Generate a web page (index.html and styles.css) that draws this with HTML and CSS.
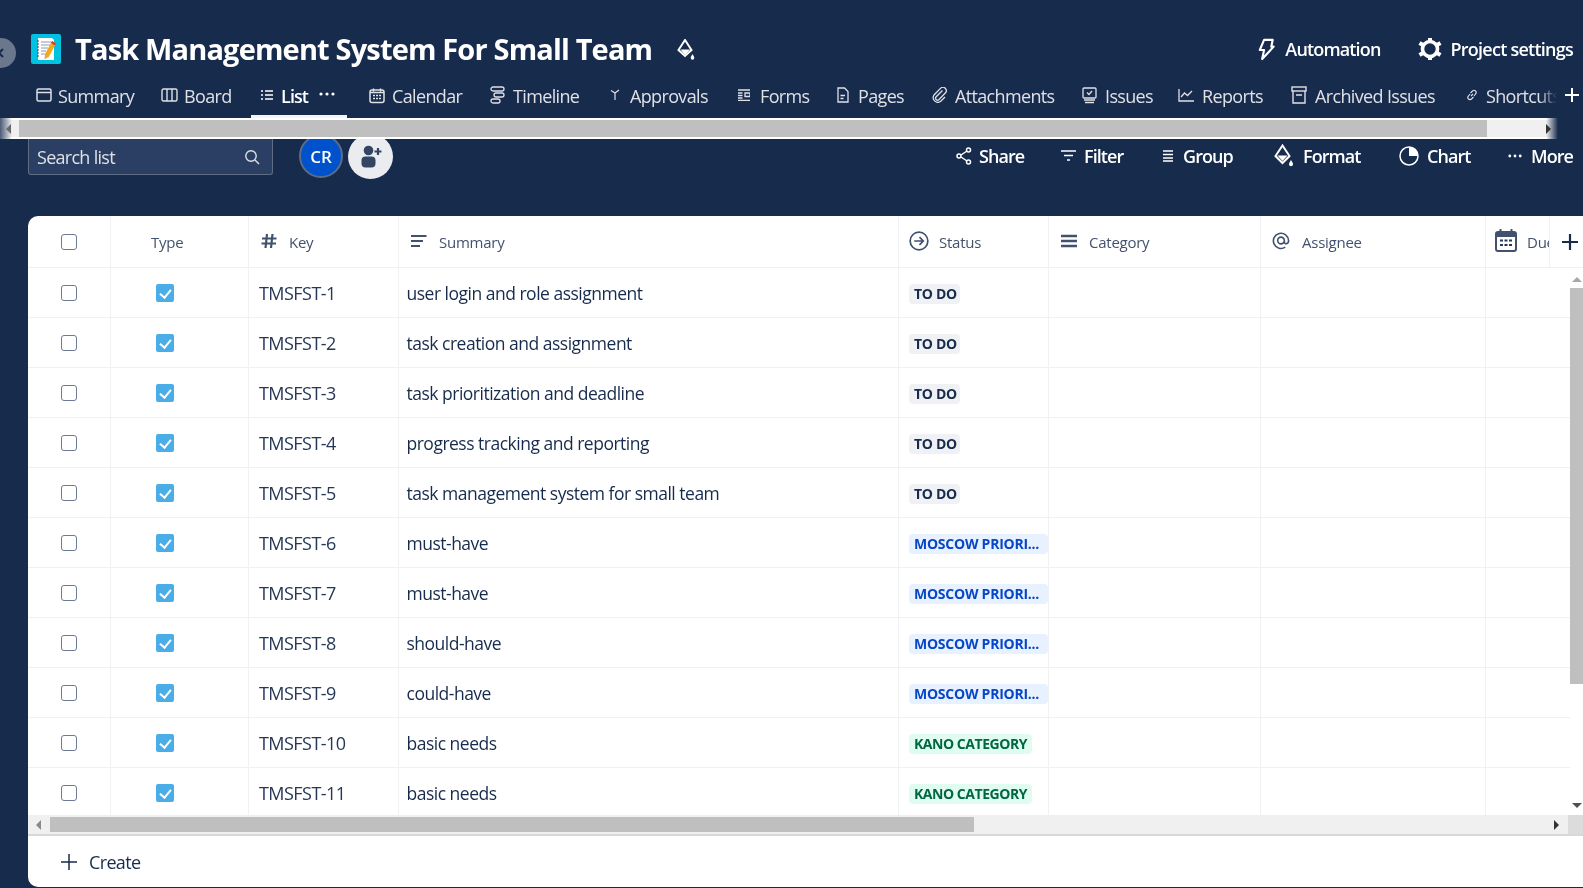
FILE: index.html
```html
<!DOCTYPE html>
<html lang="en">
<head>
<meta charset="utf-8">
<title>Task Management System For Small Team</title>
<link rel="stylesheet" href="styles.css">
</head>
<body>
<div class="page">
  <div class="back"><svg viewBox="0 0 12 12" width="12" height="12"><path d="M8 2 4 6l4 4" fill="none" stroke="#172b4d" stroke-width="2"/></svg></div>

  <header class="topbar">
    <div class="title-group">
      <svg class="logo" viewBox="0 0 30 30" width="30" height="30">
        <rect width="30" height="30" rx="2" fill="#00c2e0"/>
        <path d="M7 4h14l2 2v20H7z" fill="#fff"/>
        <path d="M6 7h2M6 10h2M6 13h2M6 16h2M6 19h2M6 22h2" stroke="#33475f" stroke-width="1"/>
        <path d="M10 8h10M10 11h9M10 14h7M10 17h5M10 20h4" stroke="#8a9bb0" stroke-width="1"/>
        <path d="M21 7l4 2.500-7 13-4.500 3 .5-5.500z" fill="#f5a623"/>
        <path d="M21 7l4 2.500-1 2-4-2.500z" fill="#e0392b"/>
      </svg>
      <h1 class="title">Task Management System For Small Team</h1>
      <svg class="paint" viewBox="0 0 18 22" width="18" height="22"><path d="M8 1 1.500 11 8 17l6.500-6z" fill="none" stroke="#fff" stroke-width="2"/><path d="M3.500 10.500h9.500L8 16z" fill="#fff"/><path d="M15.500 15c1 1.800 1.800 2.800 1.800 4a1.800 1.800 0 0 1-3.600 0c0-1.200.8-2.200 1.800-4z" fill="#fff"/></svg>
    </div>
    <div class="top-actions">
      <div class="top-action auto">
        <svg viewBox="0 0 18 24" width="18" height="23"><path d="M7 2h9l-1.500 7H17L5 22l2-9.500H2.500z" fill="none" stroke="#fff" stroke-width="2.200" stroke-linejoin="round"/></svg>
        <span>Automation</span>
      </div>
      <div class="top-action">
        <svg viewBox="0 0 24 24" width="24" height="24"><circle cx="12" cy="12" r="7.500" fill="none" stroke="#fff" stroke-width="3.600"/><path d="M12 1v4M12 19v4M1.500 6l3.500 2M19 16l3.500 2M1.500 18 5 16M19 8l3.500-2" stroke="#fff" stroke-width="4"/></svg>
        <span>Project settings</span>
      </div>
    </div>
  </header>

  <nav class="tabs">
    <div class="tab"><span class="ti"><svg viewBox="0 0 16 14" width="16" height="14"><rect x="1" y="1" width="14" height="12" rx="1.500" fill="none" stroke="#dfe1e6" stroke-width="1.500"/><path d="M1 4.500h14" stroke="#dfe1e6" stroke-width="1.500"/></svg></span><span>Summary</span></div>
    <div class="tab"><span class="ti w23"><svg viewBox="0 0 17 14" width="17" height="14"><rect x="1" y="1" width="15" height="12" rx="1.500" fill="none" stroke="#dfe1e6" stroke-width="1.400"/><path d="M6 1v12M11 1v12" stroke="#dfe1e6" stroke-width="1.400"/></svg></span><span>Board</span></div>
    <div class="tab active"><span class="ti w20"><svg viewBox="0 0 12 12" width="12" height="12"><path d="M4 2h8M4 6h8M4 10h8M0 2h2M0 6h2M0 10h2" stroke="#fff" stroke-width="1.300"/></svg></span><span>List</span><svg class="dots" viewBox="0 0 16 4" width="16" height="4"><circle cx="2" cy="2" r="1.600" fill="#fff"/><circle cx="8" cy="2" r="1.600" fill="#fff"/><circle cx="14" cy="2" r="1.600" fill="#fff"/></svg></div>
    <div class="tab"><span class="ti w23"><svg viewBox="0 0 16 16" width="16" height="17"><rect x="1" y="2.500" width="14" height="12.500" rx="2" fill="none" stroke="#dfe1e6" stroke-width="1.500"/><path d="M1 5h14M4.500 1v3M11.500 1v3" stroke="#dfe1e6" stroke-width="1.500"/><path d="M4 8h2M7 8h2M10 8h2M4 11h2M7 11h2M10 11h2" stroke="#dfe1e6" stroke-width="1.500"/></svg></span><span>Calendar</span></div>
    <div class="tab"><span class="ti w23"><svg viewBox="0 0 15 18" width="15" height="18"><rect x="1" y="1" width="13" height="4" rx="2" fill="none" stroke="#dfe1e6" stroke-width="1.300"/><rect x="4" y="7" width="10" height="4" rx="2" fill="none" stroke="#dfe1e6" stroke-width="1.300"/><rect x="1" y="13" width="9" height="4" rx="2" fill="none" stroke="#dfe1e6" stroke-width="1.300"/></svg></span><span>Timeline</span></div>
    <div class="tab"><span class="ti w20"><svg viewBox="0 0 10 12" width="10" height="12"><path d="M1 1.500 5 4l4-3M5 4v7" fill="none" stroke="#dfe1e6" stroke-width="1.200"/></svg></span><span>Approvals</span></div>
    <div class="tab"><span class="ti"><svg viewBox="0 0 12 12" width="12" height="12"><path d="M0 1h12M0 4h4.500M0 6.500h4.500M0 9h4.500M0 11.500h12M7 4h5v3.500H7z" fill="none" stroke="#dfe1e6" stroke-width="1.300"/></svg></span><span>Forms</span></div>
    <div class="tab"><span class="ti w21"><svg viewBox="0 0 12 16" width="12" height="16"><path d="M1 1h6.500L11 4.500V15H1z" fill="none" stroke="#dfe1e6" stroke-width="1.300"/><path d="M3.500 8.500H8M3.500 11.500H6.500" stroke="#dfe1e6" stroke-width="1.300"/></svg></span><span>Pages</span></div>
    <div class="tab"><span class="ti w23"><svg viewBox="0 0 16 16" width="16" height="16"><path d="M10.500 3.500 4 10a2 2 0 0 0 2.800 2.800l6.500-6.800a3.300 3.300 0 0 0-4.800-4.600L2 8a4.700 4.700 0 0 0 6.500 6.500L13 10" fill="none" stroke="#dfe1e6" stroke-width="1.300"/></svg></span><span>Attachments</span></div>
    <div class="tab"><span class="ti w23"><svg viewBox="0 0 15 17" width="15" height="17"><rect x="1" y="1" width="13" height="10" rx="1" fill="none" stroke="#dfe1e6" stroke-width="1.300"/><path d="m5 5.500 2 2 3-3.500M2 13h11M3 15.500h9" fill="none" stroke="#dfe1e6" stroke-width="1.300"/></svg></span><span>Issues</span></div>
    <div class="tab"><span class="ti w24"><svg viewBox="0 0 16 14" width="16" height="14"><path d="M1 1v12h15" fill="none" stroke="#dfe1e6" stroke-width="1.300"/><path d="m3 9 3.500-4 3 2.500L14 3" fill="none" stroke="#dfe1e6" stroke-width="1.300"/></svg></span><span>Reports</span></div>
    <div class="tab"><span class="ti w24"><svg viewBox="0 0 16 18" width="16" height="18"><rect x="1" y="1" width="14" height="4" fill="none" stroke="#dfe1e6" stroke-width="1.400"/><path d="M2 5v12h12V5M5 9h6" fill="none" stroke="#dfe1e6" stroke-width="1.400"/></svg></span><span>Archived Issues</span></div>
    <div class="tab fade"><span class="ti w20"><svg viewBox="0 0 12 12" width="12" height="12"><path d="M5 7 7 5M4.500 4 6.500 2a2 2 0 0 1 3 3L8 7M7.500 8 5.500 10a2 2 0 0 1-3-3L4 5" fill="none" stroke="#dfe1e6" stroke-width="1.100"/></svg></span><span>Shortcuts</span></div>
    <div class="tab-plus"><svg viewBox="0 0 16 16" width="16" height="16"><path d="M8 1v14M1 8h14" stroke="#fff" stroke-width="2"/></svg></div>
  </nav>

  <div class="top-scroll">
    <span class="edge-left"></span>
    <span class="arrow-l"></span>
    <span class="top-thumb"></span>
    <span class="arrow-r"></span>
    <span class="edge-right"></span>
  </div>

  <section class="toolbar">
    <div class="search"><span>Search list</span>
      <svg viewBox="0 0 16 16" width="16" height="16"><circle cx="7" cy="7" r="5.200" fill="none" stroke="#dfe1e6" stroke-width="1.400"/><path d="m11 11 4 4" stroke="#dfe1e6" stroke-width="1.400"/></svg>
    </div>
    <div class="avatar"><span>CR</span></div>
    <div class="add-user"><svg viewBox="0 0 24 24" width="24" height="24"><circle cx="9.500" cy="6.500" r="4.800" fill="#344563"/><rect x="2.500" y="12.500" width="14" height="11" rx="4" fill="#344563"/><path d="M19 4v7M15.500 7.500h7" stroke="#344563" stroke-width="2.200"/></svg></div>
    <div class="tools">
      <div class="tool"><span class="tool-i"><svg viewBox="0 0 16 18" width="16" height="18"><circle cx="3" cy="9" r="2" fill="none" stroke="#fff" stroke-width="1.500"/><circle cx="12.500" cy="3" r="2" fill="none" stroke="#fff" stroke-width="1.500"/><circle cx="12.500" cy="15" r="2" fill="none" stroke="#fff" stroke-width="1.500"/><path d="M5 8l6-4M5 10l6 4" stroke="#fff" stroke-width="1.500"/></svg></span><span>Share</span></div>
      <div class="tool"><span class="tool-i"><svg viewBox="0 0 15 12" width="15" height="12"><path d="M0 1h15M3 5.500h9M6 10h3" stroke="#fff" stroke-width="1.500"/></svg></span><span>Filter</span></div>
      <div class="tool"><span class="tool-i i20"><svg viewBox="0 0 10 12" width="10" height="12"><path d="M0 1h10M0 4.500h10M0 8h10M0 11h10" stroke="#fff" stroke-width="1.300"/></svg></span><span>Group</span></div>
      <div class="tool"><span class="tool-i i29"><svg viewBox="0 0 20 24" width="20" height="24"><path d="M8.500 1.500 1.500 12l7 7 7-7z" fill="none" stroke="#fff" stroke-width="2"/><path d="M3.500 11.500h10L8.500 17z" fill="#fff"/><path d="M17 16c1 1.800 2 3 2 4.300a2 2 0 0 1-4 0c0-1.300 1-2.500 2-4.300z" fill="#fff"/></svg></span><span>Format</span></div>
      <div class="tool"><span class="tool-i i28"><svg viewBox="0 0 20 20" width="20" height="20"><circle cx="10" cy="10" r="9" fill="none" stroke="#fff" stroke-width="1.500"/><path d="M10 1a9 9 0 0 1 9 9h-9z" fill="#fff"/></svg></span><span>Chart</span></div>
      <div class="tool"><span class="tool-i"><svg viewBox="0 0 14 4" width="14" height="4"><circle cx="1.800" cy="2" r="1.400" fill="#fff"/><circle cx="7" cy="2" r="1.400" fill="#fff"/><circle cx="12.200" cy="2" r="1.400" fill="#fff"/></svg></span><span>More</span></div>
    </div>
  </section>

  <main class="card">
    <div class="head">
      <div class="hc hc-center"><span class="cb"></span></div>
      <div class="hc hc-type"><span>Type</span></div>
      <div class="hc"><span class="hi"><svg viewBox="0 0 16 16" width="16" height="16"><path d="M6 1 4.500 15M11.500 1 10 15M1 5.500h14.500M.5 10.500h14.500" stroke="#42526e" stroke-width="2.200"/></svg></span><span>Key</span></div>
      <div class="hc"><span class="hi"><svg viewBox="0 0 16 14" width="16" height="14"><path d="M0 2h15.500M0 7h12M0 12h9" stroke="#42526e" stroke-width="2.200"/></svg></span><span>Summary</span></div>
      <div class="hc hc-10"><span class="hi hi-30"><svg viewBox="0 0 21 21" width="20" height="20"><circle cx="10.500" cy="10.500" r="9.300" fill="none" stroke="#42526e" stroke-width="1.800"/><path d="M5.500 10.500h9M11 6.500l4 4-4 4" fill="none" stroke="#42526e" stroke-width="1.800"/></svg></span><span>Status</span></div>
      <div class="hc"><span class="hi"><svg viewBox="0 0 16 14" width="16" height="14"><path d="M0 2h16M0 7h16M0 12h16" stroke="#42526e" stroke-width="2.300"/></svg></span><span>Category</span></div>
      <div class="hc hc-11"><span class="hi hi-30"><svg viewBox="0 0 18 20" width="18" height="19"><path d="M12.500 10a3.500 3.500 0 1 1-7 0 3.500 3.500 0 0 1 7 0v1.500c0 2.700 4.500 2.700 4.500-1.500a8 8 0 1 0-3.500 7" fill="none" stroke="#42526e" stroke-width="1.700"/></svg></span><span>Assignee</span></div>
      <div class="hc hc-9 hc-due"><span class="hi hi-32"><svg viewBox="0 0 22 23" width="22" height="23"><rect x="1" y="3" width="20" height="19" rx="2" fill="none" stroke="#42526e" stroke-width="2"/><path d="M1 3h20v5H1z" fill="#42526e"/><path d="M5.500 0v4M16.500 0v4" stroke="#42526e" stroke-width="2"/><path d="M5 11.500h3M9.500 11.500h3M14 11.500h3M5 16h3M9.500 16h3M14 16h3" stroke="#253858" stroke-width="2"/></svg></span><span class="due">Due date</span></div>
      <div class="hc-add"><svg viewBox="0 0 16 16" width="16" height="16"><path d="M8 0v16M0 8h16" stroke="#172b4d" stroke-width="2.200"/></svg></div>
    </div>

    <div class="grid-wrap">
      <div class="rows">
        <div class="row"><div class="c c-center"><span class="cb"></span></div><div class="c c-type"><span class="tick"></span></div><div class="c c-key">TMSFST-1</div><div class="c c-sum">user login and role assignment</div><div class="c c-st"><span class="loz grey">TO DO</span></div><div class="c"></div><div class="c"></div><div class="c"></div></div>
        <div class="row"><div class="c c-center"><span class="cb"></span></div><div class="c c-type"><span class="tick"></span></div><div class="c c-key">TMSFST-2</div><div class="c c-sum">task creation and assignment</div><div class="c c-st"><span class="loz grey">TO DO</span></div><div class="c"></div><div class="c"></div><div class="c"></div></div>
        <div class="row"><div class="c c-center"><span class="cb"></span></div><div class="c c-type"><span class="tick"></span></div><div class="c c-key">TMSFST-3</div><div class="c c-sum">task prioritization and deadline</div><div class="c c-st"><span class="loz grey">TO DO</span></div><div class="c"></div><div class="c"></div><div class="c"></div></div>
        <div class="row"><div class="c c-center"><span class="cb"></span></div><div class="c c-type"><span class="tick"></span></div><div class="c c-key">TMSFST-4</div><div class="c c-sum">progress tracking and reporting</div><div class="c c-st"><span class="loz grey">TO DO</span></div><div class="c"></div><div class="c"></div><div class="c"></div></div>
        <div class="row"><div class="c c-center"><span class="cb"></span></div><div class="c c-type"><span class="tick"></span></div><div class="c c-key">TMSFST-5</div><div class="c c-sum">task management system for small team</div><div class="c c-st"><span class="loz grey">TO DO</span></div><div class="c"></div><div class="c"></div><div class="c"></div></div>
        <div class="row"><div class="c c-center"><span class="cb"></span></div><div class="c c-type"><span class="tick"></span></div><div class="c c-key">TMSFST-6</div><div class="c c-sum">must-have</div><div class="c c-st"><span class="loz blue">MOSCOW PRIORI...</span></div><div class="c"></div><div class="c"></div><div class="c"></div></div>
        <div class="row"><div class="c c-center"><span class="cb"></span></div><div class="c c-type"><span class="tick"></span></div><div class="c c-key">TMSFST-7</div><div class="c c-sum">must-have</div><div class="c c-st"><span class="loz blue">MOSCOW PRIORI...</span></div><div class="c"></div><div class="c"></div><div class="c"></div></div>
        <div class="row"><div class="c c-center"><span class="cb"></span></div><div class="c c-type"><span class="tick"></span></div><div class="c c-key">TMSFST-8</div><div class="c c-sum">should-have</div><div class="c c-st"><span class="loz blue">MOSCOW PRIORI...</span></div><div class="c"></div><div class="c"></div><div class="c"></div></div>
        <div class="row"><div class="c c-center"><span class="cb"></span></div><div class="c c-type"><span class="tick"></span></div><div class="c c-key">TMSFST-9</div><div class="c c-sum">could-have</div><div class="c c-st"><span class="loz blue">MOSCOW PRIORI...</span></div><div class="c"></div><div class="c"></div><div class="c"></div></div>
        <div class="row"><div class="c c-center"><span class="cb"></span></div><div class="c c-type"><span class="tick"></span></div><div class="c c-key">TMSFST-10</div><div class="c c-sum">basic needs</div><div class="c c-st"><span class="loz green">KANO CATEGORY</span></div><div class="c"></div><div class="c"></div><div class="c"></div></div>
        <div class="row"><div class="c c-center"><span class="cb"></span></div><div class="c c-type"><span class="tick"></span></div><div class="c c-key">TMSFST-11</div><div class="c c-sum">basic needs</div><div class="c c-st"><span class="loz green">KANO CATEGORY</span></div><div class="c"></div><div class="c"></div><div class="c"></div></div>
      </div>
      <div class="vscroll"><span class="arrow-u"></span><span class="v-thumb"></span><span class="arrow-d"></span></div>
    </div>

    <div class="hscroll"><span class="arrow-l dark"></span><span class="h-thumb"></span><span class="arrow-r h"></span><span class="corner"></span></div>

    <div class="create"><svg viewBox="0 0 16 16" width="16" height="16"><path d="M8 0v16M0 8h16" stroke="#172b4d" stroke-width="1.500"/></svg><span>Create</span></div>
  </main>
</div>
</body>
</html>
```
FILE: styles.css
```css
* { box-sizing: border-box; }
html, body { margin: 0; height: 100%; }
body { background: #172b4d; overflow: hidden; font-family: "Open Sans", "Noto Sans", "Liberation Sans", sans-serif; color: #172b4d; }
.page { width: 1583px; height: 888px; position: relative; overflow: hidden; background: #172b4d; filter: blur(0.3px); }

.back { position: absolute; left: -14px; top: 38px; width: 30px; height: 30px; border-radius: 50%; background: #6b778c; display: flex; align-items: center; justify-content: center; }

.topbar { height: 72px; padding: 26px 10px 0 31px; display: flex; justify-content: space-between; align-items: center; }
.title-group { display: flex; align-items: center; }
.logo { flex: none; margin-top: -1px; }
.title { margin: -1px 0 0 14px; font-size: 29px; font-weight: 700; color: #fff; letter-spacing: -0.84px; line-height: 46px; white-space: nowrap; }
.paint { margin-left: 25px; margin-top: 2px; }
.top-actions { display: flex; }
.top-action { display: flex; align-items: center; gap: 8px; color: #fff; font-size: 18px; font-weight: 600; letter-spacing: -0.75px; }
.top-action.auto { gap: 10px; margin-right: 38px; letter-spacing: -0.85px; }

.tabs { height: 46px; padding-left: 36px; display: grid; grid-template-columns: 125px 90px 118px 121px 120px 128px 99px 95px 150px 96px 113px 175px 91px 26px; grid-template-rows: 46px; position: relative; }
.tab { display: flex; align-items: center; padding-top: 2px; color: #dfe1e6; font-size: 18px; font-weight: 400; letter-spacing: -0.65px; white-space: nowrap; position: relative; min-width: 0; }
.ti { flex: none; width: 22px; display: flex; align-items: center; margin-top: -2px; }
.ti.w20 { width: 20px; }
.ti.w21 { width: 21px; }
.ti.w23 { width: 23px; }
.ti.w24 { width: 24px; }
.tab.active { color: #fff; font-weight: 600; padding-left: 10px; letter-spacing: -0.9px; }
.tab.active::after { content: ""; position: absolute; left: 0; top: 43px; width: 96px; height: 3px; background: #f4f5f7; }
.dots { margin: -5px 0 0 11px; flex: none; }
.fade { overflow: hidden; }
.fade::after { content: ""; position: absolute; right: 0; top: 0; bottom: 0; width: 18px; background: linear-gradient(90deg, rgba(23,43,77,0), #172b4d); }
.tab-plus { display: flex; align-items: center; padding-left: 7px; }

.top-scroll { height: 21px; position: relative; z-index: 2; display: flex; align-items: center; background: #f0f0f0; border-top: 2px solid #fff; border-bottom: 2px solid #fff; width: 1558px; padding-left: 19px; }
.top-thumb { width: 1468px; height: 100%; background: #bfbfbf; }
.edge-left { position: absolute; left: 0; top: -2px; bottom: -2px; width: 12px; background: linear-gradient(90deg, #4a5a76, rgba(240,240,240,0)); }
.edge-right { position: absolute; right: 0; top: -2px; bottom: -2px; width: 12px; background: linear-gradient(90deg, rgba(240,240,240,0), #172b4d); }
.arrow-l, .arrow-r { position: absolute; top: 50%; margin-top: -5px; width: 0; height: 0; border-top: 5px solid transparent; border-bottom: 5px solid transparent; z-index: 1; }
.arrow-l { left: 6px; border-right: 5px solid #6b6b6b; }
.arrow-r { left: 1546px; border-left: 5px solid #333; }

.toolbar { height: 36px; margin: 0 0 41px 28px; display: flex; align-items: center; position: relative; }
.search { width: 245px; height: 36px; flex: none; background: #2a3f63; border: 1px solid #5e6c84; border-top: none; border-radius: 0 0 3px 3px; padding: 0 12px 0 8px; display: flex; align-items: center; justify-content: space-between; color: #dfe1e6; font-size: 18px; letter-spacing: -0.72px; }
.avatar { width: 44px; height: 44px; flex: none; margin: -2px 0 0 26px; border-radius: 50%; background: #0052cc; border: 2px solid #5e6c84; display: flex; align-items: center; justify-content: center; color: #fff; font-size: 17px; font-weight: 600; }
.add-user { width: 45px; height: 45px; flex: none; margin: -2px 0 0 5px; border-radius: 50%; background: #ebecf0; display: flex; align-items: center; justify-content: center; }
.tools { position: relative; margin: -2px 0 0 563px; display: grid; grid-template-columns: 105px 102px 111px 125px 109px 65px; color: #fff; font-size: 18px; font-weight: 600; letter-spacing: -0.92px; white-space: nowrap; }
.tool { display: flex; align-items: center; }
.tool-i { flex: none; width: 23px; display: flex; align-items: center; }
.tool-i.i20 { width: 20px; }
.tool-i.i29 { width: 29px; }
.tool-i.i28 { width: 28px; }

.card { margin-left: 28px; width: 1555px; height: 671px; background: #fff; border-radius: 10px 0 0 10px; overflow: hidden; display: flex; flex-direction: column; }
.head { height: 52px; flex: none; display: grid; grid-template-columns: 83px 138px 150px 500px 150px 212px 225px 64px 33px; border-bottom: 1px solid #f0f1f3; color: #42526e; font-size: 15px; letter-spacing: -0.25px; }
.hc { display: flex; align-items: center; padding: 1px 0 0 12px; border-right: 1px solid #f0f1f3; white-space: nowrap; overflow: hidden; }
.hc-center { justify-content: center; padding: 0; }
.hc-type { padding-left: 40px; }
.hc-10 { padding-left: 10px; }
.hc-11 { padding-left: 11px; }
.hc-9 { padding-left: 9px; }
.hc-due { border-right: 1px solid #f0f1f3; }
.hi { flex: none; width: 28px; display: flex; align-items: center; margin-top: -3px; }
.hi-30 { width: 30px; }
.hi-32 { width: 32px; }
.hc-add { display: flex; align-items: center; padding-left: 12px; }

.cb { display: block; width: 16px; height: 16px; border: 1.500px solid #6b7a99; border-radius: 3px; background: #fff; }

.grid-wrap { height: 547px; flex: none; display: flex; overflow: hidden; }
.rows { flex: 1; min-width: 0; }
.row { height: 50px; display: grid; grid-template-columns: 83px 138px 150px 500px 150px 212px 225px 84px; border-bottom: 1px solid #f0f1f3; }
.c { display: flex; align-items: center; border-right: 1px solid #f0f1f3; font-size: 17.500px; letter-spacing: -0.5px; white-space: nowrap; color: #172b4d; padding-top: 1px; }
.row .c:last-child { border-right: none; }
.c-center { justify-content: center; padding-top: 0; }
.c-type { padding-left: 45px; padding-top: 0; }
.c-key { padding-left: 10px; font-size: 18px; letter-spacing: -0.55px; color: #253858; }
.c-sum { padding-left: 7.500px; }
.c-st { padding-left: 10px; padding-top: 2px; }
.tick { display: block; width: 18px; height: 18px; border-radius: 2px; background: #4bade8; position: relative; }
.tick::after { content: ""; position: absolute; left: 6px; top: 3px; width: 5px; height: 9px; border: solid #fff; border-width: 0 2px 2px 0; transform: rotate(40deg); }
.loz { display: inline-block; height: 20px; line-height: 20px; padding: 0 5px; border-radius: 4px; font-size: 14px; font-weight: 700; letter-spacing: -0.3px; white-space: nowrap; }
.grey { background: #f0f1f4; color: #172b4d; padding-right: 3px; }
.blue { background: #e7f1ff; color: #0747c6; width: 139px; letter-spacing: -0.24px; }
.green { background: #e0fcf0; color: #006644; width: 123px; letter-spacing: -0.45px; }

.vscroll { flex: none; width: 13px; background: #fff; position: relative; padding-top: 20px; }
.v-thumb { display: block; height: 396px; background: #bfbfbf; }
.arrow-u, .arrow-d { position: absolute; left: 2px; width: 0; height: 0; border-left: 5px solid transparent; border-right: 5px solid transparent; }
.arrow-u { top: 9px; border-bottom: 5px solid #a8a8a8; }
.arrow-d { bottom: 7px; border-top: 5px solid #505050; }

.hscroll { height: 21px; flex: none; position: relative; background: #f0f0f0; padding: 2px 0 2px 22px; border-bottom: 2px solid #d8d8d8; display: flex; }
.h-thumb { width: 924px; height: 100%; background: #bfbfbf; }
.hscroll .arrow-l { left: 8px; border-right-color: #8a8a8a; }
.hscroll .arrow-r.h { left: 1526px; }
.corner { position: absolute; right: 0; top: 0; bottom: 0; width: 15px; background: #dcdcdc; }

.create { flex: 1; display: flex; align-items: center; gap: 12px; padding: 0 0 0 33px; font-size: 18px; letter-spacing: -0.65px; color: #172b4d; }
```
